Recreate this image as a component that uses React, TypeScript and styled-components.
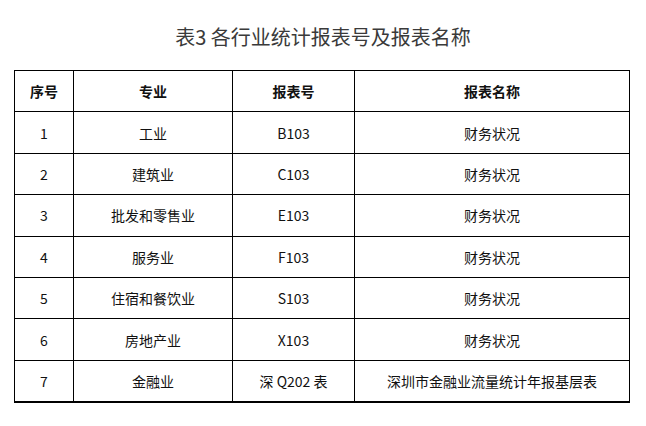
import styled, { createGlobalStyle } from 'styled-components'

const GlobalStyle = createGlobalStyle`
  body {
    margin: 0;
    background: #ffffff;
    font-family: "Noto Sans CJK SC", "Noto Sans", sans-serif;
  }
`

const Page = styled.div`
  width: 646px;
  height: 426px;
  padding-top: 23px;
  box-sizing: border-box;
`

const Title = styled.h1`
  margin: 0 0 19px;
  text-align: center;
  font-size: 20px;
  line-height: 28px;
  font-weight: 400;
  color: #3a3a3a;
`

const Table = styled.table`
  width: 615px;
  margin-left: 14px;
  border-collapse: collapse;
  table-layout: fixed;
  color: #111;
  font-size: 14px;
`

const Row = styled.tr`
  height: 41.4px;
`

const Cell = styled.td<{ $head?: boolean }>`
  border: 1px solid #000;
  padding: 0;
  text-align: center;
  vertical-align: middle;
  font-weight: ${(p) => (p.$head ? 700 : 400)};
  line-height: 20px;
`

const LastRow = styled(Row)`
  td {
    border-bottom-width: 2px;
  }
`

const rows = [
  ['1', '工业', 'B103', '财务状况'],
  ['2', '建筑业', 'C103', '财务状况'],
  ['3', '批发和零售业', 'E103', '财务状况'],
  ['4', '服务业', 'F103', '财务状况'],
  ['5', '住宿和餐饮业', 'S103', '财务状况'],
  ['6', '房地产业', 'X103', '财务状况'],
  ['7', '金融业', '深 Q202 表', '深圳市金融业流量统计年报基层表']
]

export default function App() {
  return (
    <>
      <GlobalStyle />
      <Page>
        <Title>表3 各行业统计报表号及报表名称</Title>
        <Table>
          <colgroup>
            <col style={{ width: 59 }} />
            <col style={{ width: 159 }} />
            <col style={{ width: 122 }} />
            <col style={{ width: 275 }} />
          </colgroup>
          <thead>
            <Row>
              <Cell as="th" $head>序号</Cell>
              <Cell as="th" $head>专业</Cell>
              <Cell as="th" $head>报表号</Cell>
              <Cell as="th" $head>报表名称</Cell>
            </Row>
          </thead>
          <tbody>
            {rows.map((r, i) => {
              const R = i === rows.length - 1 ? LastRow : Row
              return (
                <R key={r[0]}>
                  {r.map((c, j) => (
                    <Cell key={j}>{c}</Cell>
                  ))}
                </R>
              )
            })}
          </tbody>
        </Table>
      </Page>
    </>
  )
}
